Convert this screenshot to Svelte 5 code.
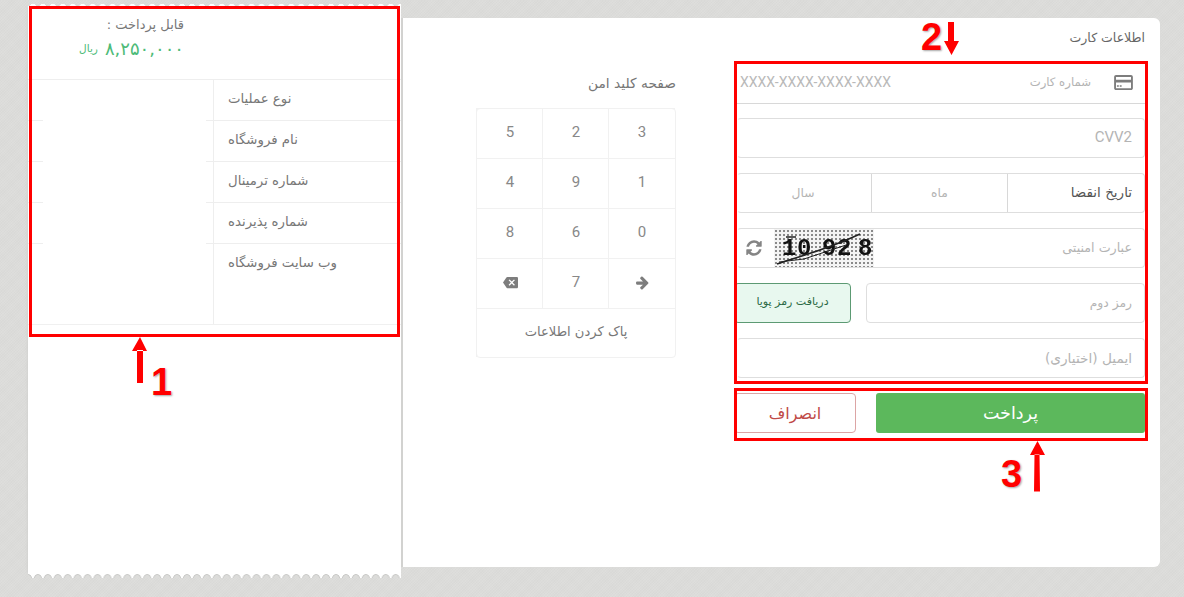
<script>
  const rows = ['نوع عملیات', 'نام فروشگاه', 'شماره ترمینال', 'شماره پذیرنده', 'وب سایت فروشگاه'];
  const keys = ['5', '2', '3', '4', '9', '1', '8', '6', '0', 'back', '7', 'next'];
</script>

<div class="page">
  <aside class="receipt">
    <div class="due">
      <div class="due-label" dir="rtl">قابل پرداخت :</div>
      <div class="due-amount"><span class="rial">ریال</span><span class="sum">۸,۲۵۰,۰۰۰</span></div>
    </div>
    <div class="table">
      {#each rows as label, i}
        <div class="row" class:tall={i === rows.length - 1}>
          <div class="value"></div>
          <div class="label">{label}</div>
        </div>
      {/each}
    </div>
  </aside>

  <main class="card">
    <section class="pad-col">
      <h2 class="pad-title" dir="rtl">صفحه کلید امن</h2>
      <div class="keypad">
        {#each keys as key}
          <div class="key">
            {#if key === 'back'}
              <svg class="i-back" viewBox="0 0 24 24"><path d="M22 3H7c-.69 0-1.23.35-1.59.88L0 12l5.41 8.11c.36.53.9.89 1.59.89h15c1.1 0 2-.9 2-2V5c0-1.1-.9-2-2-2zm-3 12.59L17.59 17 14 13.41 10.41 17 9 15.59 12.59 12 9 8.41 10.41 7 14 10.59 17.59 7 19 8.41 15.41 12 19 15.59z"/></svg>
            {:else if key === 'next'}
              <svg class="i-next" viewBox="0 0 1792 1792"><path d="M1600 960q0 54-37 91l-651 651q-39 37-91 37-51 0-90-37l-75-75q-38-38-38-91t38-91l293-293h-704q-52 0-84.5-37.5t-32.5-90.5v-128q0-53 32.5-90.5t84.5-37.5h704l-293-294q-38-36-38-90t38-90l75-75q38-38 90-38 53 0 91 38l651 651q37 35 37 90z"/></svg>
            {:else}
              {key}
            {/if}
          </div>
        {/each}
        <div class="key wide" dir="rtl">پاک کردن اطلاعات</div>
      </div>
    </section>

    <section class="form-col">
      <h1 class="card-title" dir="rtl">اطلاعات کارت</h1>

      <div class="field number">
        <span class="mask">XXXX-XXXX-XXXX-XXXX</span>
        <span class="ph num-label" dir="rtl">شماره کارت</span>
        <svg class="i-card" viewBox="0 0 20 16"><path d="M18 0H2C.9 0 0 .9 0 2v12c0 1.1.9 2 2 2h16c1.1 0 2-.9 2-2V2c0-1.100-.9-2-2-2zm0 14H2V8h16v6zm0-9H2V2h16v3z" /><path d="M3 11h2v1.500H3zM6 11h2v1.500H6z" /></svg>
      </div>

      <div class="field boxed end"><span class="ph latin">CVV2</span></div>

      <div class="field boxed expiry">
        <span class="cell year ph">سال</span>
        <span class="cell ph">ماه</span>
        <span class="cell head" dir="rtl">تاریخ انقضا</span>
      </div>

      <div class="field boxed captcha-row">
        <svg class="i-refresh" viewBox="0 0 1792 1792"><path d="M1639 1056q0 5-1 7-64 268-268 434.500t-478 166.500q-146 0-282.500-55t-243.500-157l-129 129q-19 19-45 19t-45-19-19-45v-448q0-26 19-45t45-19h448q26 0 45 19t19 45-19 45l-137 137q71 66 161 102t187 36q134 0 250-65t186-179q11-17 53-117 8-23 30-23h192q13 0 22.500 9.500t9.500 22.500zm25-800v448q0 26-19 45t-45 19h-448q-26 0-45-19t-19-45 19-45l138-138q-148-137-349-137-134 0-250 65t-186 179q-11 17-53 117-8 23-30 23h-199q-13 0-22.500-9.500t-9.500-22.500v-7q65-268 270-434.500t480-166.500q146 0 284 55.500t245 156.500l130-129q19-19 45-19t45 19 19 45z"/></svg>
        <div class="captcha">
          <svg viewBox="0 0 100 38">
            <text x="8" y="26">1</text>
            <text x="23" y="26">0</text>
            <text x="48" y="26">9</text>
            <text x="63" y="26">2</text>
            <text x="84" y="26">8</text>
            <path d="M3 35 C25 27 50 22 86 5" fill="none" stroke="#222" stroke-width="1.600" />
            <path d="M5 33 L30 30 L72 16" fill="none" stroke="#222" stroke-width="1" />
            <path d="M12 8 H22" fill="none" stroke="#222" stroke-width="1.500" />
          </svg>
        </div>
        <span class="ph security" dir="rtl">عبارت امنیتی</span>
      </div>

      <div class="split">
        <button class="otp" dir="rtl">دریافت رمز پویا</button>
        <div class="field boxed end grow"><span class="ph" dir="rtl">رمز دوم</span></div>
      </div>

      <div class="field boxed end"><span class="ph email" dir="rtl">ایمیل (اختیاری)</span></div>

      <div class="split actions">
        <button class="cancel" dir="rtl">انصراف</button>
        <button class="pay" dir="rtl">پرداخت</button>
      </div>
    </section>
  </main>

  <div class="mark mark-1"></div>
  <div class="mark mark-2"></div>
  <div class="mark mark-3"></div>

  <svg class="arrows" viewBox="0 0 1184 597">
    <path d="M137 383h6v-33h-6z M132 351l8-14 7 14z" />
    <path d="M948 22h6v20h-6z M944 41h15l-7.500 14z" />
    <path d="M1034 491.500h6l-.5-37h-5z M1030 455l7.500-14 7.500 14z" />
  </svg>
  <span class="num num-1">1</span>
  <span class="num num-2">2</span>
  <span class="num num-3">3</span>
</div>

<style>
  :global(body) {
    margin: 0;
    background: #dddddb;
  }

  .page {
    position: relative;
    width: 1184px;
    height: 597px;
    overflow: hidden;
    display: flex;
    align-items: flex-start;
    padding-left: 28px;
    box-sizing: border-box;
    font-family: "DejaVu Sans", "Noto Sans", sans-serif;
    background-color: #dcdcda;
    background-image:
      repeating-linear-gradient(45deg, rgba(255, 255, 255, 0.05) 0 1px, transparent 1px 2px),
      repeating-linear-gradient(-45deg, rgba(0, 0, 0, 0.015) 0 1px, transparent 1px 2px);
  }

  /* receipt */
  .receipt {
    position: relative;
    flex: none;
    width: 373px;
    height: 568px;
    margin-top: 6px;
    background: #fff;
    box-sizing: border-box;
    box-shadow: -2px 0 2px -1px #d2d2d0;
  }

  .receipt::before,
  .receipt::after {
    content: "";
    position: absolute;
    left: 0;
    right: 0;
    background-repeat: repeat-x;
  }

  .receipt::before {
    top: -3px;
    height: 4px;
    background-size: 9.950px 4px;
    background-image: radial-gradient(circle at 50% 100%, #fff 3px, transparent 3.500px);
  }

  .receipt::after {
    bottom: -4px;
    height: 6px;
    background-color: #fff;
    background-size: 9.950px 6px;
    background-position: -5px 0;
    background-image: radial-gradient(circle at 50% 100%, #dcdcda 2.600px, #c2c2c0 3.400px, transparent 4.200px);
  }

  .due {
    height: 73px;
    padding: 8px 217px 0 0;
    box-sizing: border-box;
    text-align: right;
  }

  .due-label {
    font-size: 13px;
    line-height: 22px;
    color: #777;
  }

  .due-amount {
    display: flex;
    justify-content: flex-end;
    align-items: center;
    gap: 7px;
    height: 24px;
    color: #4dbb78;
  }

  .rial {
    font-size: 10.500px;
  }

  .sum {
    font-size: 18px;
  }

  .row {
    display: flex;
    height: 41px;
    border-top: 1px solid #eeeeee;
    box-sizing: border-box;
  }

  .row + .row .value {
    margin-top: -1px;
  }

  .row.tall {
    height: 80px;
    border-bottom: 1px solid #f0f0f0;
    box-sizing: content-box;
  }

  .value {
    flex: none;
    width: 163px;
    margin: 0 7px 0 15px;
    background: #fff;
  }

  .label {
    flex: 1;
    border-left: 1px solid #eeeeee;
    padding-left: 14px;
    font-size: 13.300px;
    line-height: 37px;
    color: #777;
    text-align: left;
  }

  /* card */
  .card {
    flex: none;
    width: 757px;
    height: 549px;
    margin-left: 2px;
    margin-top: 18px;
    background: #fff;
    border-radius: 0 6px 6px 0;
    display: flex;
    justify-content: space-between;
    padding: 0 15px 0 73px;
    box-sizing: border-box;
    box-shadow: -2px 0 0 #d2d2d0;
  }

  .pad-col {
    width: 200px;
  }

  .pad-title {
    margin: 0;
    height: 90px;
    padding-top: 56px;
    box-sizing: border-box;
    font-size: 13.800px;
    font-weight: normal;
    line-height: 18px;
    color: #777;
    text-align: right;
  }

  .keypad {
    display: grid;
    grid-template-columns: repeat(3, 1fr);
    grid-template-rows: repeat(4, 50px) 48px;
    border: 1px solid #f1f1f1;
    border-radius: 4px;
    width: 200px;
    box-sizing: border-box;
  }

  .key {
    display: flex;
    align-items: center;
    justify-content: center;
    border-left: 1px solid #f1f1f1;
    border-top: 1px solid #f1f1f1;
    padding-bottom: 4px;
    font-family: Roboto, sans-serif;
    font-size: 15px;
    color: #888;
    margin: -1px 0 0 -1px;
  }

  .key.wide {
    grid-column: 1 / 4;
    font-family: "DejaVu Sans", sans-serif;
    font-size: 13.100px;
    color: #777;
  }

  .i-back {
    width: 15px;
    height: 15px;
    fill: #7d7d7d;
  }

  .i-next {
    width: 15px;
    height: 15px;
    fill: #7d7d7d;
  }

  .form-col {
    width: 408px;
  }

  .card-title {
    margin: 0;
    height: 46px;
    padding-top: 11px;
    box-sizing: border-box;
    font-size: 12.500px;
    font-weight: normal;
    line-height: 18px;
    color: #666;
    text-align: right;
  }

  .field {
    height: 40px;
    display: flex;
    align-items: center;
    box-sizing: border-box;
    margin-bottom: 15px;
    font-size: 12px;
  }

  .ph {
    color: #b4b4b4;
    font-size: 12.300px;
  }

  .ph.num-label {
    font-size: 11.700px;
  }

  .ph.security {
    font-size: 12.700px;
    padding-bottom: 1px;
  }

  .ph.email {
    font-size: 13.700px;
    padding-bottom: 1px;
  }

  .ph.latin {
    font-family: Roboto, sans-serif;
    font-size: 15px;
    padding-bottom: 2px;
  }

  .boxed {
    border: 1px solid #dedede;
    border-left-color: transparent;
    border-radius: 4px;
    padding: 0 12px;
  }

  .end {
    justify-content: flex-end;
  }

  .number {
    margin-bottom: 14px;
    border-bottom: 1px solid #d8d8d8;
    padding: 0 12px 3px 3px;
  }

  .mask {
    font-family: Roboto, sans-serif;
    font-size: 14px;
    color: #b9b9b9;
    flex: 1;
  }

  .i-card {
    width: 19px;
    height: 15px;
    fill: #7d7d7d;
    margin-left: 23px;
  }

  .expiry {
    padding: 0;
    display: grid;
    grid-template-columns: 134px 136px 1fr;
    align-items: stretch;
  }

  .cell {
    display: flex;
    align-items: center;
    justify-content: center;
    border-right: 1px solid #d8d8d8;
  }

  .cell.year {
    padding-right: 3px;
  }

  .cell.head {
    border-right: 0;
    justify-content: flex-start;
    padding-right: 12px;
    padding-bottom: 2px;
    font-size: 13.500px;
    color: #555;
  }

  .captcha-row {
    padding: 0 12px 0 7px;
  }

  .i-refresh {
    width: 18px;
    height: 18px;
    fill: #858585;
  }

  .captcha {
    width: 100px;
    height: 38px;
    margin-left: 11px;
    background-color: #f4f4f4;
    background-image: radial-gradient(circle, #8a8a8a 0.8px, transparent 1.100px);
    background-size: 4px 4px;
    margin-right: auto;
  }

  .captcha svg {
    display: block;
    width: 100%;
    height: 100%;
    filter: blur(0.3px);
  }

  .captcha text {
    font-family: "Liberation Mono", monospace;
    font-size: 24px;
    font-weight: bold;
    fill: #111;
  }

  .split {
    display: flex;
    gap: 15px;
    align-items: stretch;
  }

  .grow {
    flex: 1;
    border-left-color: #dedede;
  }

  button {
    font-family: inherit;
    cursor: pointer;
    padding: 0;
    border-radius: 4px;
  }

  .otp {
    flex: none;
    width: 117px;
    height: 40px;
    margin-left: -3px;
    padding-bottom: 3px;
    background: #e8f8ef;
    border: 1px solid #5c9a73;
    color: #2c6a46;
    font-size: 11px;
  }

  .actions {
    gap: 20px;
  }

  .cancel {
    flex: none;
    width: 122px;
    height: 40px;
    margin-left: -3px;
    background: #fff;
    border: 1px solid #dca5a5;
    color: #c04a48;
    font-size: 16px;
  }

  .pay {
    flex: 1;
    height: 40px;
    background: #5cb85c;
    border: 0;
    border-radius: 3px;
    color: #fff;
    font-size: 17.500px;
  }

  /* annotations */
  .mark {
    position: absolute;
    border: 3px solid #ff0000;
    box-sizing: border-box;
    pointer-events: none;
  }

  .mark-1 {
    left: 29px;
    top: 6px;
    width: 371px;
    height: 331px;
  }

  .mark-2 {
    left: 734px;
    top: 61px;
    width: 414px;
    height: 323px;
  }

  .mark-3 {
    left: 734px;
    top: 388px;
    width: 414px;
    height: 53px;
  }

  .arrows {
    position: absolute;
    left: 0;
    top: 0;
    width: 1184px;
    height: 597px;
    fill: #ff0000;
    pointer-events: none;
  }

  .num {
    position: absolute;
    font-family: "Liberation Sans", sans-serif;
    font-weight: bold;
    font-size: 38px;
    line-height: 37px;
    color: #ff0000;
    text-shadow: 1px 1px 2px rgba(0, 0, 0, 0.35);
  }

  .num-1 {
    left: 151px;
    top: 364px;
  }

  .num-2 {
    left: 921px;
    top: 19px;
  }

  .num-3 {
    left: 1001px;
    top: 456px;
  }
</style>
